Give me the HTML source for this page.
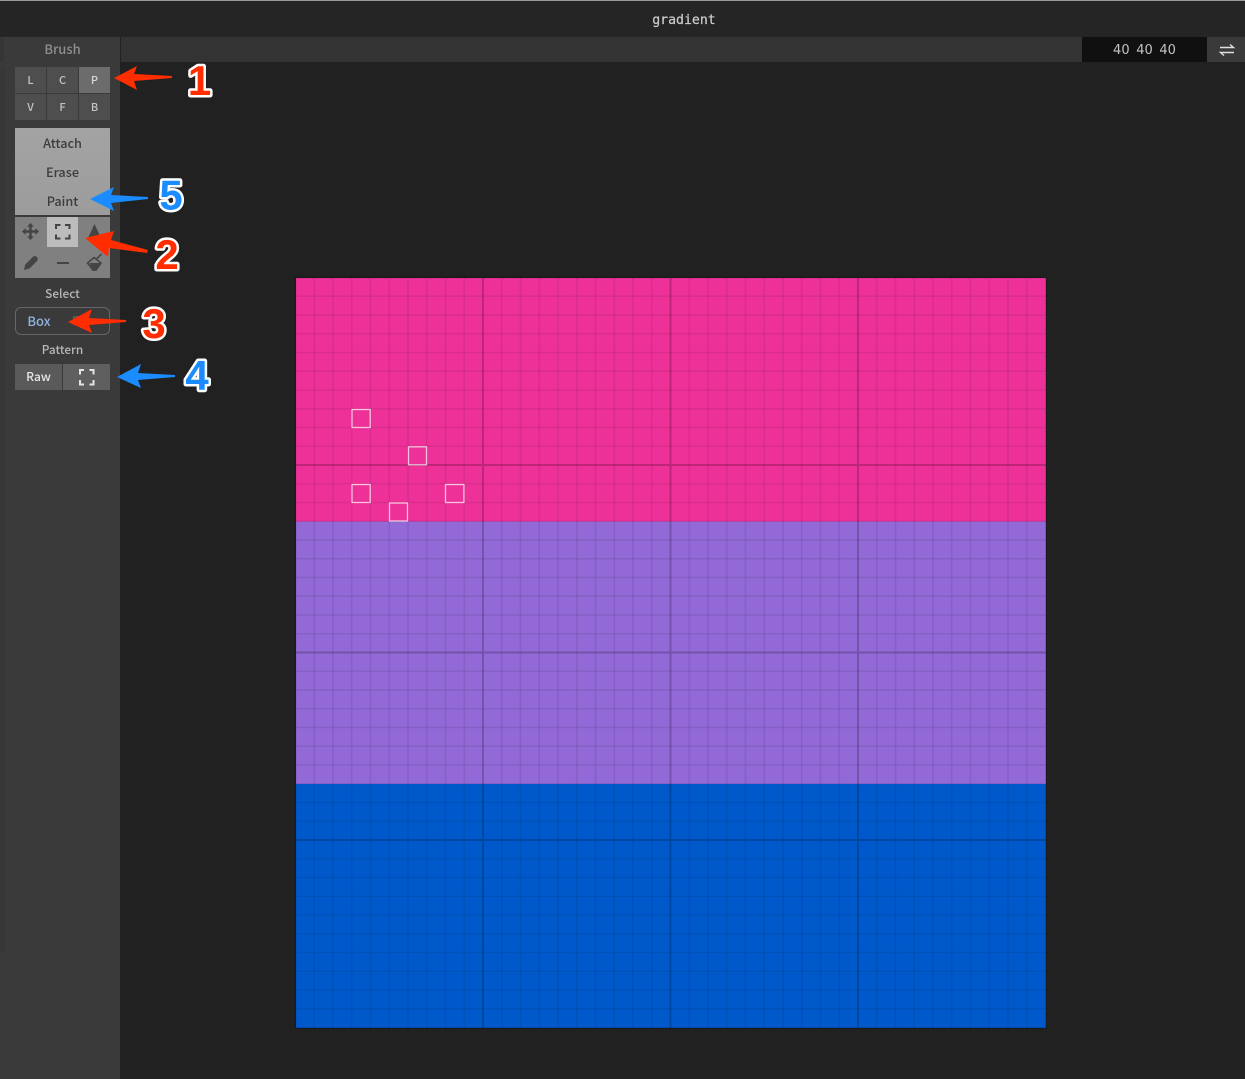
<!DOCTYPE html>
<html><head><meta charset="utf-8">
<style>
html,body{margin:0;padding:0;background:#212121;width:1245px;height:1079px;overflow:hidden}
body{position:relative;font-family:"Noto Sans CJK KR","Liberation Sans",sans-serif}
.a{position:absolute}
.t{position:absolute;text-align:center;white-space:nowrap}
.b{position:absolute;background:#4e4e4e;color:#c4c4c4;font-size:11px;font-weight:500;text-align:center;line-height:26px;width:31px;height:26px}
svg{position:absolute;left:0;top:0}
</style></head><body>
<div class="a" style="left:0;top:0;width:1245px;height:1px;background:#9a9a9a"></div>
<div class="a" style="left:0;top:1px;width:1245px;height:36px;background:#252525"></div>
<div class="t" style="left:584px;width:200px;top:14px;font:13.2px/14px 'DejaVu Sans Mono',monospace;color:#cfcfcf;-webkit-text-stroke:.2px #cfcfcf">gradient</div>

<div class="a" style="left:0;top:37px;width:120px;height:1042px;background:#3a3a3a"></div>
<div class="a" style="left:0;top:38px;width:4px;height:24px;background:#353535;border-radius:0 3px 3px 0"></div>
<div class="a" style="left:0;top:66px;width:5px;height:887px;background:#373737"></div>
<div class="a" style="left:121px;top:37px;width:961px;height:25px;background:#333"></div>
<div class="a" style="left:1082px;top:37px;width:125px;height:25px;background:#101010"></div>
<div class="a" style="left:1207px;top:37px;width:38px;height:25px;background:#3a3a3a"></div>
<div class="t" style="left:1082px;width:125px;top:43px;font:13px/16px 'DejaVu Sans',sans-serif;color:#c4c4c4;word-spacing:2.500px">40 40 40</div>

<div class="t" style="left:15px;width:95px;top:39px;font-size:13px;line-height:19px;color:#8e8e8e;font-weight:500">Brush</div>
<div class="b" style="left:15px;top:67px">L</div>
<div class="b" style="left:47px;top:67px">C</div>
<div class="b" style="left:79px;top:67px;background:#6c6c6c;color:#d6d6d6">P</div>
<div class="b" style="left:15px;top:94px">V</div>
<div class="b" style="left:47px;top:94px">F</div>
<div class="b" style="left:79px;top:94px">B</div>

<div class="a" style="left:15px;top:128px;width:95px;height:87px;background:linear-gradient(#a3a3a3,#9c9c9c)"></div>
<div class="t" style="left:15px;width:95px;top:134px;font-size:12.7px;line-height:18px;color:#3c3c3c;font-weight:500">Attach</div>
<div class="t" style="left:15px;width:95px;top:163px;font-size:12.7px;line-height:18px;color:#3c3c3c;font-weight:500">Erase</div>
<div class="t" style="left:15px;width:95px;top:192px;font-size:12.7px;line-height:18px;color:#3c3c3c;font-weight:500">Paint</div>

<div class="a" style="left:15px;top:217px;width:95px;height:61px;background:#808080"></div>
<div class="a" style="left:47px;top:217px;width:31px;height:30px;background:#bcbcbc"></div>

<div class="t" style="left:15px;width:95px;top:285px;font-size:11.8px;line-height:17px;color:#b8b8b8;font-weight:500">Select</div>
<div class="a" style="left:15px;top:307px;width:93px;height:26px;border:1px solid #666;border-radius:6px"></div>
<div class="t" style="left:24px;width:30px;top:312px;font-size:13px;line-height:18px;color:#8fb4e0;font-weight:500">Box</div>
<div class="a" style="left:73px;top:316px;width:12px;height:9px;background:#5a5a5a"></div>
<div class="t" style="left:15px;width:95px;top:341px;font-size:11.8px;line-height:17px;color:#b8b8b8;font-weight:500">Pattern</div>
<div class="a" style="left:15px;top:364px;width:47px;height:26px;background:#5a5a5a"></div>
<div class="a" style="left:63px;top:364px;width:47px;height:26px;background:#5f5f5f"></div>
<div class="t" style="left:15px;width:47px;top:369px;font-size:12px;line-height:16px;color:#e6e6e6;font-weight:500">Raw</div>

<svg width="1245" height="1079" viewBox="0 0 1245 1079">
<rect x="296" y="278" width="750" height="243.5" fill="#ee3198"/>
<rect x="296" y="521.5" width="750" height="262.5" fill="#9269d6"/>
<rect x="296" y="784" width="750" height="244" fill="#0059cb"/>
<path fill="none" stroke="#000" stroke-opacity=".08" stroke-width="1.6" d="M314.25 278V1028M333 278V1028M351.75 278V1028M370.5 278V1028M389.25 278V1028M408 278V1028M426.75 278V1028M445.5 278V1028M464.25 278V1028M501.75 278V1028M520.5 278V1028M539.25 278V1028M558 278V1028M576.75 278V1028M595.5 278V1028M614.25 278V1028M633 278V1028M651.75 278V1028M689.25 278V1028M708 278V1028M726.75 278V1028M745.5 278V1028M764.25 278V1028M783 278V1028M801.75 278V1028M820.5 278V1028M839.25 278V1028M876.75 278V1028M895.5 278V1028M914.25 278V1028M933 278V1028M951.75 278V1028M970.5 278V1028M989.25 278V1028M1008 278V1028M1026.75 278V1028"/>
<path fill="none" stroke="#000" stroke-opacity=".08" stroke-width="1.6" d="M296 296.25H1046M296 315H1046M296 333.75H1046M296 352.5H1046M296 371.25H1046M296 390H1046M296 408.75H1046M296 427.5H1046M296 446.25H1046M296 483.75H1046M296 502.5H1046M296 521.25H1046M296 540H1046M296 558.75H1046M296 577.5H1046M296 596.25H1046M296 615H1046M296 633.75H1046M296 671.25H1046M296 690H1046M296 708.75H1046M296 727.5H1046M296 746.25H1046M296 765H1046M296 783.75H1046M296 802.5H1046M296 821.25H1046M296 858.75H1046M296 877.5H1046M296 896.25H1046M296 915H1046M296 933.75H1046M296 952.5H1046M296 971.25H1046M296 990H1046M296 1008.75H1046"/>
<path fill="none" stroke="#000" stroke-opacity=".2" stroke-width="2" d="M483 278V1028M670.5 278V1028M858 278V1028M296 465H1046M296 652.5H1046M296 840H1046"/>
<rect x="295.5" y="277.5" width="750.5" height="750.5" fill="none" stroke="#000" stroke-opacity=".2" stroke-width="1.5"/>
<g fill="none" stroke="#fff" stroke-opacity=".72" stroke-width="1.3">
<rect x="352" y="409.5" width="18.2" height="18"/>
<rect x="408.5" y="446.8" width="18" height="18"/>
<rect x="352" y="484.5" width="18.2" height="18"/>
<rect x="445.5" y="484.5" width="18.4" height="18"/>
<rect x="389.5" y="503" width="18" height="18"/>
</g>

<!-- swap icon -->
<g fill="none" stroke="#e0e0e0" stroke-width="1.4">
<path d="M1220 47.5H1233.5L1230 44.5"/>
<path d="M1234 52.5H1220.5L1224 55.5"/>
</g>

<!-- tool icons -->
<g fill="#444">
<path d="M30.5 223l3.4 3.6h-2.2v3.7h3.7v-2.2l3.6 3.4-3.6 3.4v-2.2h-3.7v3.7h2.2l-3.4 3.6-3.4-3.6h2.2v-3.7h-3.7v2.2l-3.6-3.4 3.6-3.4v2.2h3.7v-3.700h-2.2z"/>
<path d="M94.5 224l6.5 14h-13z"/>
<path d="M24 270l1.2-5.500 7.300-7.300c3-3 7.200.8 4.300 4l-7.300 7.300z"/>
<rect x="57" y="262" width="12" height="2"/>
<path d="M89.500 263h11l-2.500 4.500-2.500 3h-2.500z"/>
</g>
<path d="M87.500 263l6.500-5.500 7 5.500-5 7.200h-3zM96.500 259l5-5" stroke="#444" stroke-width="1.600" fill="none"/>
<g fill="none" stroke="#444" stroke-width="2">
<path d="M56 229v-4h4.500M65 225h4.500v4M69.500 234.500v4h-4.500M60.500 238.500h-4.500v-4"/>
</g>
<g fill="none" stroke="#e4e4e4" stroke-width="2">
<path d="M80 374.500v-4.500h4M89.500 370h4v4.500M93.500 380v4.500h-4M84 384.500h-4v-4.500"/>
</g>

<!-- arrows -->
<g fill="#ff2d00">
<path d="M114 78L137 66L134 74L172 76V78L134 81L137 90Z"/>
<path d="M85 238L114 231L111 240L148 250L147 253L109 248L108 257Z"/>
<path d="M68 322L92 309L89 318L126 320V322L89 325L92 333Z"/>
</g>
<g fill="#1a8cff">
<path d="M90 199L114 187L111 195L148 197V199L111 203L114 211Z"/>
<path d="M117 377L141 364L138 373L175 375V377L138 380L141 388Z"/>
</g>

<!-- numbers -->
<g font-family="'Liberation Sans',sans-serif" font-weight="700" font-size="42" text-anchor="middle" stroke="#fff" stroke-width="5" stroke-linejoin="round" paint-order="stroke">
<text x="199.500" y="95" fill="#ff2d00">1</text>
<text x="167" y="269" fill="#ff2d00">2</text>
<text x="154" y="338" fill="#ff2d00">3</text>
<text x="197" y="390" fill="#1a8cff">4</text>
<text x="171" y="209.500" fill="#1a8cff">5</text>
</g>
</svg>
</body></html>
